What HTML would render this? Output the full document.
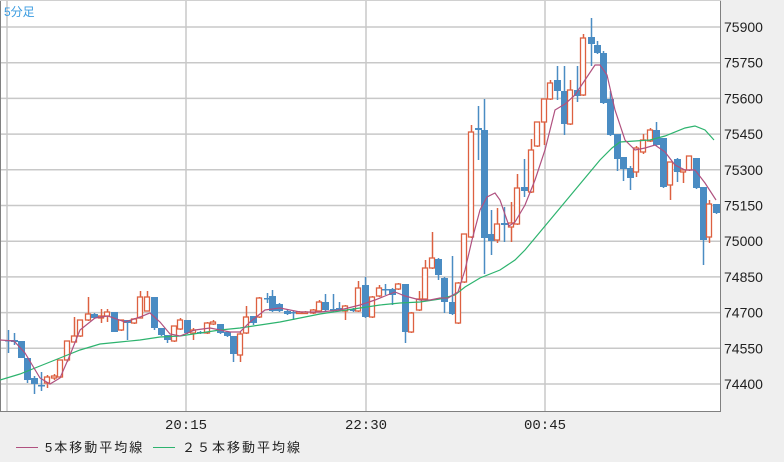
<!DOCTYPE html>
<html><head><meta charset="utf-8"><style>
body{margin:0;width:784px;height:462px;overflow:hidden;background:#efefef;font-family:"Liberation Sans","Noto Sans CJK JP",sans-serif}
svg{display:block}
</style></head><body>
<svg id="s" width="784" height="462" xmlns="http://www.w3.org/2000/svg">
<rect x="0" y="0" width="784" height="462" fill="#efefef"/>
<rect x="0" y="0" width="721" height="412" fill="#fff"/>
<g stroke="#c8c8c8" stroke-width="1.5" id="grid"></g>
<line x1="0.5" y1="0" x2="0.5" y2="412" stroke="#808080"/>
<line x1="720.5" y1="0" x2="720.5" y2="412" stroke="#808080"/>
<line x1="0" y1="411.5" x2="721" y2="411.5" stroke="#808080"/>
<line x1="0" y1="0.5" x2="721" y2="0.5" stroke="#d0d0d0"/>
<g id="c"></g>
<polyline id="m25" fill="none" stroke="#2db36e" stroke-width="1.2"/>
<polyline id="m5" fill="none" stroke="#b0517f" stroke-width="1.2"/>
<text x="4" y="16" font-size="12" fill="#3a9be0">5分足</text>
<g font-size="14" fill="#222" id="ax"></g>
<g font-size="14" fill="#222" font-family="Liberation Mono,monospace" text-anchor="middle">
<text x="186" y="429">20:15</text><text x="366" y="429">22:30</text><text x="545" y="429">00:45</text></g>
<line x1="16" y1="447.5" x2="38" y2="447.5" stroke="#b0517f"/>
<text x="45" y="452" font-size="13" fill="#222" letter-spacing="2">5本移動平均線</text>
<line x1="153" y1="447.5" x2="175" y2="447.5" stroke="#2db36e"/>
<text x="182" y="452" font-size="13" fill="#222" letter-spacing="2">２５本移動平均線</text>
</svg>
<script>
var NS="http://www.w3.org/2000/svg";
function el(p,t,a){var e=document.createElementNS(NS,t);for(var k in a)e.setAttribute(k,a[k]);p.appendChild(e);return e}
var g=document.getElementById('grid');
var lab=[75900,75750,75600,75450,75300,75150,75000,74850,74700,74550,74400];
var ax=document.getElementById('ax');
lab.forEach(function(v,i){var y=27+i*35.7;el(g,'line',{x1:0,x2:720,y1:y,y2:y});var t=el(ax,'text',{x:724,y:y+5});t.textContent=v;});
[7,186,366,545].forEach(function(x){el(g,'line',{x1:x,x2:x,y1:0,y2:411})});
// x, open, close, high, low  (pixel y)
var d=[[8,340,340,330,353],[14,340,342,333,345],[21,341,358,341,358],[27,358,380,358,383],[34,378,384,376,394],[41,385,385,372,391],[47,383,377,375,388],[54,378,376,374,380],[60,377,360,360,378],[67,360,341,341,362],[74,342,336,317,342],[80,336,320,320,337],[88,320,314,297,321],[94,314,318,313,319],[101,318,316,309,323],[107,316,312,309,322],[114,312,332,312,332],[121,330,320,320,331],[127,320,323,320,340],[134,323,319,318,324],[140,318,297,291,318],[147,311,297,291,311],[154,297,328,297,330],[161,328,335,328,336],[167,335,340,335,343],[174,341,326,326,342],[180,329,320,318,330],[187,320,333,320,334],[193,333,330,328,340],[200,332,333,331,334],[207,333,323,322,334],[213,324,322,320,325],[220,324,333,324,334],[227,332,336,331,337],[233,336,354,336,362],[240,355,334,332,362],[246,333,317,306,334],[253,316,323,316,325],[259,317,298,297,318],[267,298,298,293,303],[272,296,311,290,312],[279,304,311,303,312],[287,311,314,310,315],[293,312,313,311,320],[299,313,312,311,314],[305,313,312,311,314],[313,313,310,309,314],[319,311,302,300,312],[325,302,310,294,311],[333,309,311,294,312],[339,308,310,302,311],[345,311,306,305,320],[353,309,311,308,312],[358,311,288,281,312],[365,285,317,277,318],[372,317,297,296,318],[379,296,288,285,297],[385,289,290,284,295],[392,289,295,288,305],[398,289,284,283,290],[405,284,332,284,343],[411,332,313,312,333],[419,310,299,291,311],[425,299,268,260,300],[432,268,258,232,269],[438,259,275,258,280],[444,278,302,277,313],[452,302,314,256,315],[458,323,283,282,324],[464,282,234,234,283],[471,237,132,125,238],[478,128,130,106,160],[484,130,238,99,274],[491,234,241,210,255],[497,240,224,208,243],[504,223,225,207,242],[511,227,223,202,242],[517,224,188,174,225],[524,187,191,159,197],[531,192,150,139,193],[537,146,122,122,147],[544,122,99,99,145],[550,99,83,80,100],[557,80,91,66,100],[564,91,124,66,135],[570,124,90,80,125],[577,90,96,66,102],[583,95,38,34,96],[591,37,44,18,66],[597,45,53,41,54],[603,53,103,51,104],[610,99,135,91,136],[617,134,159,134,171],[623,157,169,157,181],[630,168,178,166,190],[636,172,148,146,177],[643,152,140,134,154],[650,141,130,128,142],[656,130,145,122,146],[663,138,187,138,188],[670,185,162,162,200],[677,159,172,158,182],[683,172,170,170,183],[689,170,156,156,171],[696,158,188,158,189],[703,187,240,187,265],[709,237,204,200,243],[716,204,213,204,214]];
var c=document.getElementById('c');
d.forEach(function(k){var x=k[0],o=k[1],cl=k[2],h=k[3],l=k[4];var up=cl<o;var col=up?'#dd6040':'#4a8cc3';
el(c,'line',{x1:x+.5,x2:x+.5,y1:h,y2:l,stroke:col,'stroke-width':1.5});
var t=Math.min(o,cl),b=Math.max(o,cl);if(b-t<1.5){b=t+1.5}
if(up)el(c,'rect',{x:x-2.5,y:t,width:5,height:b-t,fill:'#fff',stroke:col,'stroke-width':1.3});
else el(c,'rect',{x:x-3,y:t,width:7,height:b-t,fill:col});});
var m5="0,340 14,341 25,353 40,378 50,384 60,378 70,355 80,330 95,318 108,316 125,322 140,317 150,313 160,322 170,334 180,336 195,330 210,328 230,332 240,332 250,322 265,310 280,308 300,312 320,312 340,310 360,305 375,300 385,296 395,292 405,296 420,300 430,300 440,298 448,298 458,292 465,270 472,240 480,210 487,197 495,193 500,200 509,226 515,222 525,205 535,180 545,150 555,110 565,104 575,95 585,80 595,65 600,65 607,75 615,110 625,140 635,150 645,148 655,145 665,152 675,165 685,170 695,170 705,183 716,200";
var m25="0,380 20,374 40,366 60,358 80,350 100,344 120,342 140,340 160,337 180,336 200,333 220,330 240,328 260,325 280,322 300,318 320,314 340,311 360,308 380,305 400,303 420,302 440,299 455,295 465,287 480,278 500,270 515,260 525,250 540,232 555,214 570,196 585,178 600,160 612,148 620,142 635,141 650,140 665,136 685,128 695,126 705,130 714,140";
document.getElementById('m5').setAttribute('points',m5);
document.getElementById('m25').setAttribute('points',m25);
</script>
</body></html>
